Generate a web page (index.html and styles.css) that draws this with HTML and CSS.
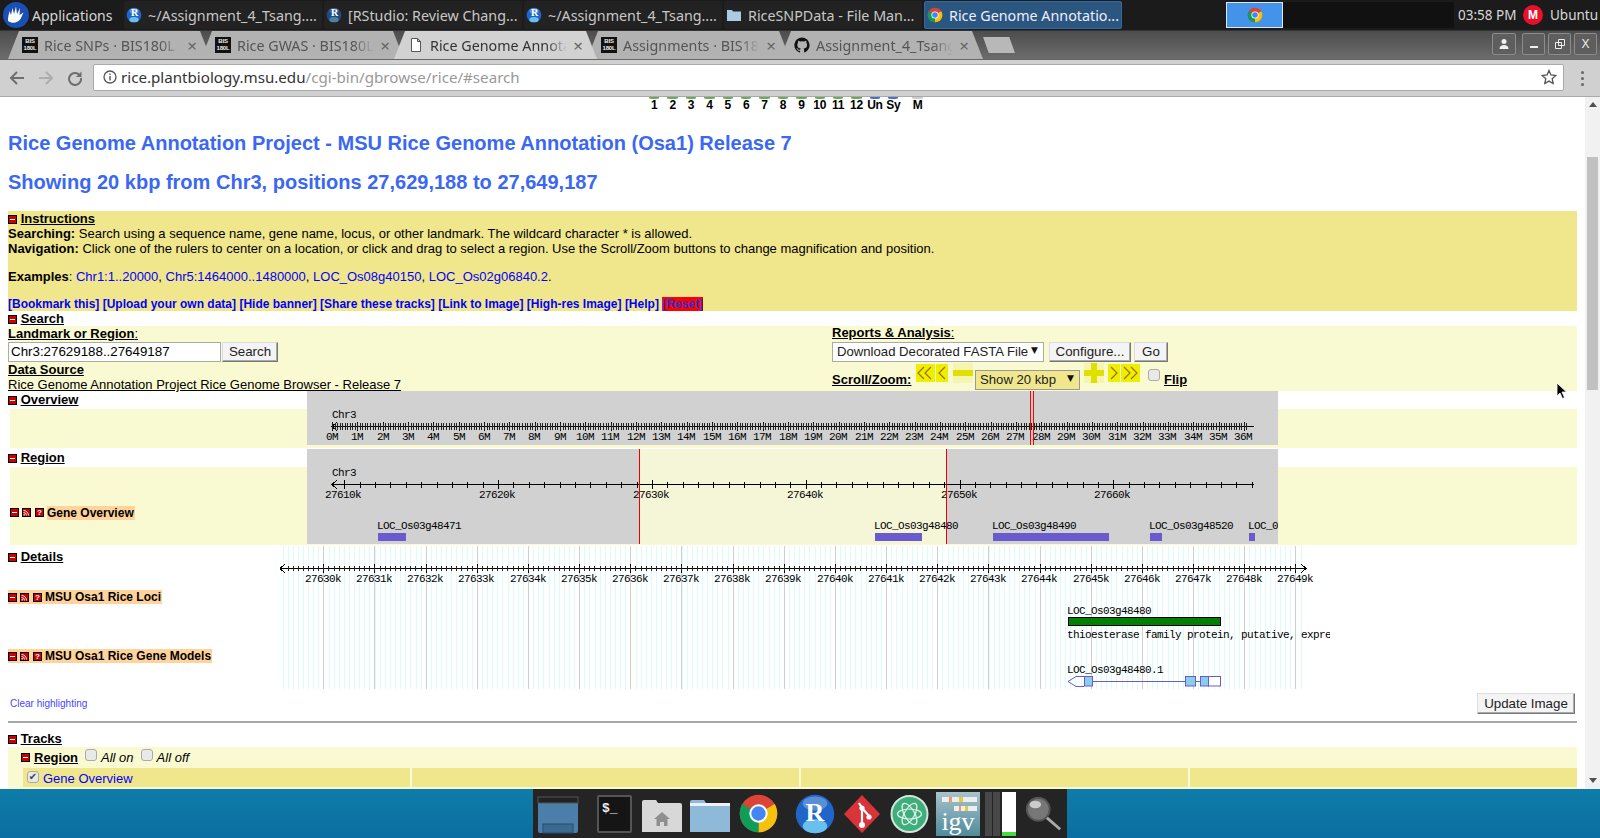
FILE: index.html
```html
<!DOCTYPE html>
<html lang="en">
<head>
<meta charset="utf-8">
<title>Rice Genome Annotation Project</title>
<link rel="stylesheet" href="styles.css">
</head>
<body>
<svg class="defs" width="0" height="0">
  <symbol id="minus" viewBox="0 0 9 9"><rect width="9" height="9" fill="#000"/><rect x="1" y="1" width="7" height="7" fill="#c00"/><rect x="2" y="4" width="5" height="1" fill="#fff"/></symbol>
  <symbol id="rss" viewBox="0 0 9 9"><rect width="9" height="9" fill="#000"/><rect x="1" y="1" width="7" height="7" fill="#c00"/><path d="M1.5 2.5A5 5 0 0 1 6.5 7.5M1.5 4.5A3 3 0 0 1 4.5 7.5" fill="none" stroke="#fff" stroke-width=".9"/><rect x="1.5" y="6.2" width="1.3" height="1.3" fill="#fff"/></symbol>
  <symbol id="chrome" viewBox="0 0 24 24"><circle cx="12" cy="12" r="11" fill="#db4437"/><path d="M12 12 21.5 6.500A11 11 0 0 1 12 23Z" fill="#f4c20d"/><path d="M12 12 12 23A11 11 0 0 1 2.500 6.500Z" fill="#0f9d58"/><circle cx="12" cy="12" r="5.400" fill="#fff"/><circle cx="12" cy="12" r="4.200" fill="#4285f4"/></symbol>
  <symbol id="rball" viewBox="0 0 24 24"><circle cx="12" cy="12" r="11" fill="#1f66c8"/><ellipse cx="12" cy="19" rx="7" ry="4" fill="#69c0ef"/><ellipse cx="12" cy="6" rx="7" ry="4" fill="#5a8fd8"/></symbol>
</svg>

<header class="panel">
  <div class="panel-left">
    <svg class="whisker" viewBox="0 0 26 26" width="26" height="26"><circle cx="13" cy="13" r="13" fill="#1a4fb4"/><path d="M5 19C5 14 6 12 6.500 9L8 13 9.500 6 11 12 13 4.500 14 12 17 6 16.500 13 20.500 10.500 17.500 17C15 21 9 22 5 19Z" fill="#fff"/></svg>
    <span class="apps">Applications</span>
  </div>
  <nav class="tasks">
    <div class="task"><svg width="16" height="16"><use href="#rball"/></svg><span class="r-mark">R</span><span>~/Assignment_4_Tsang....</span></div>
    <div class="task"><svg width="16" height="16" class="dim"><use href="#rball"/></svg><span class="r-mark">R</span><span>[RStudio: Review Chang...</span></div>
    <div class="task"><svg width="16" height="16"><use href="#rball"/></svg><span class="r-mark">R</span><span>~/Assignment_4_Tsang....</span></div>
    <div class="task"><svg width="16" height="16" viewBox="0 0 16 16"><path d="M1 3h5l1 1.500h8V14H1Z" fill="#a9cbe4"/></svg><span>RiceSNPData - File Man...</span></div>
    <div class="task active"><svg width="16" height="16"><use href="#chrome"/></svg><span>Rice Genome Annotatio...</span></div>
  </nav>
  <div class="workspaces">
    <div class="ws on"><svg width="16" height="16"><use href="#chrome"/></svg></div>
    <div class="ws"></div><div class="ws"></div><div class="ws"></div>
  </div>
  <div class="panel-right">
    <span class="clock">03:58 PM</span>
    <span class="mega">M</span>
    <span class="user">Ubuntu</span>
  </div>
</header>

<div class="tabstrip">
  <div class="tab"><span class="fav">BIS<br>180L</span><span class="tab-title">Rice SNPs · BIS180L</span><span class="tab-x">×</span></div>
  <div class="tab"><span class="fav">BIS<br>180L</span><span class="tab-title">Rice GWAS · BIS180L</span><span class="tab-x">×</span></div>
  <div class="tab current"><svg width="16" height="16" viewBox="0 0 16 16"><path d="M3.500 1.500h6l3 3v10h-9ZM9.500 1.500v3h3" fill="#fff" stroke="#555"/></svg><span class="tab-title">Rice Genome Annotation</span><span class="tab-x">×</span></div>
  <div class="tab"><span class="fav">BIS<br>180L</span><span class="tab-title">Assignments · BIS180L</span><span class="tab-x">×</span></div>
  <div class="tab"><svg width="16" height="16" viewBox="0 0 16 16"><path d="M8 .5a7.700 7.700 0 0 0-2.400 15c.4.100.5-.2.500-.4v-1.400c-2.100.5-2.600-1-2.600-1-.3-.9-.8-1.100-.8-1.100-.7-.5.100-.5.100-.5.800.1 1.200.8 1.200.8.700 1.200 1.800.8 2.300.6.100-.5.300-.8.500-1-1.700-.2-3.500-.9-3.500-3.800 0-.8.300-1.500.8-2-.1-.2-.3-1 .1-2 0 0 .6-.2 2.100.8a7 7 0 0 1 3.800 0c1.500-1 2.100-.8 2.100-.8.400 1 .2 1.800.1 2 .5.500.8 1.200.8 2 0 3-1.800 3.600-3.500 3.800.3.200.5.700.5 1.400v2.100c0 .2.100.5.500.4A7.700 7.700 0 0 0 8 .5Z" fill="#111"/></svg><span class="tab-title">Assignment_4_Tsang</span><span class="tab-x">×</span></div>
  <div class="newtab"></div>
  <div class="win-buttons">
    <span class="profile"><svg width="12" height="12" viewBox="0 0 12 12"><circle cx="6" cy="3.500" r="2.500" fill="#eee"/><path d="M1.500 11c0-3 2-4 4.500-4s4.500 1 4.500 4Z" fill="#eee"/></svg></span>
    <span class="winbtn"><svg width="10" height="10"><rect x="1" y="7" width="8" height="2" fill="#eee"/></svg></span>
    <span class="winbtn"><svg width="10" height="10"><path d="M3.500.5h6v6h-6ZM.5 3.500h6v6h-6Z" fill="#555" stroke="#eee"/></svg></span>
    <span class="winbtn winx">X</span>
  </div>
</div>

<div class="toolbar">
  <svg class="navicon" width="16" height="16" viewBox="0 0 16 16"><path d="M15 8H2M8 2 2 8l6 6" fill="none" stroke="#6e6e6e" stroke-width="2"/></svg>
  <svg class="navicon" width="16" height="16" viewBox="0 0 16 16"><path d="M1 8h13M8 2l6 6-6 6" fill="none" stroke="#adadad" stroke-width="2"/></svg>
  <svg class="navicon" width="16" height="16" viewBox="0 0 16 16"><path d="M13 5.500A6 6 0 1 0 14 8" fill="none" stroke="#6e6e6e" stroke-width="2"/><path d="M14.500 1.500v5.500H9Z" fill="#6e6e6e"/></svg>
  <div class="omnibox">
    <svg width="14" height="14" viewBox="0 0 14 14"><circle cx="7" cy="7" r="6" fill="none" stroke="#555" stroke-width="1.300"/><rect x="6.300" y="6" width="1.400" height="4.500" fill="#555"/><rect x="6.300" y="3.500" width="1.400" height="1.400" fill="#555"/></svg>
    <span class="url"><b>rice.plantbiology.msu.edu</b>/cgi-bin/gbrowse/rice/#search</span>
    <svg class="star" width="16" height="16" viewBox="0 0 16 16"><path d="m8 1.500 2 4.500 4.800.5-3.600 3.200 1 4.800L8 12.100 3.800 14.500l1-4.800L1.200 6.500 6 6Z" fill="none" stroke="#555" stroke-width="1.300"/></svg>
  </div>
  <div class="dots"><i></i><i></i><i></i></div>
</div>

<div class="viewport">
  <main class="page">
    <div class="chroms">
      <span class="g">1</span><span class="g">2</span><span class="g">3</span><span class="g">4</span><span class="g">5</span><span class="g">6</span><span class="g">7</span><span class="g">8</span><span class="g">9</span><span class="g">10</span><span class="g">11</span><span class="g">12</span><span class="b">Un</span><span class="b">Sy</span><span class="m">M</span>
    </div>
    <h1 class="title">Rice Genome Annotation Project - MSU Rice Genome Annotation (Osa1) Release 7</h1>
    <h1 class="title second">Showing 20 kbp from Chr3, positions 27,629,188 to 27,649,187</h1>

    <section class="instructions">
      <div class="sechead"><svg class="ico"><use href="#minus"/></svg> <u>Instructions</u></div>
      <div><b>Searching:</b> Search using a sequence name, gene name, locus, or other landmark. The wildcard character * is allowed.</div>
      <div><b>Navigation:</b> Click one of the rulers to center on a location, or click and drag to select a region. Use the Scroll/Zoom buttons to change magnification and position.</div>
      <div class="examples"><b>Examples</b>: <a>Chr1:1..20000</a>, <a>Chr5:1464000..1480000</a>, <a>LOC_Os08g40150</a>, <a>LOC_Os02g06840.2</a>.</div>
      <div class="linkrow"><a>[Bookmark this]</a> <a>[Upload your own data]</a> <a>[Hide banner]</a> <a>[Share these tracks]</a> <a>[Link to Image]</a> <a>[High-res Image]</a> <a>[Help]</a> <a class="reset">[Reset]</a></div>
    </section>

    <div class="sechead bar"><svg class="ico"><use href="#minus"/></svg> <u>Search</u></div>
    <section class="search">
      <div class="col left">
        <div class="lab"><u><b>Landmark or Region</b>:</u></div>
        <div class="ctl"><span class="input">Chr3:27629188..27649187</span><span class="btn">Search</span></div>
        <div class="lab ds"><u><b>Data Source</b></u></div>
        <div class="lab"><u>Rice Genome Annotation Project Rice Genome Browser - Release 7</u></div>
      </div>
      <div class="col">
        <div class="lab"><u><b>Reports &amp; Analysis</b>:</u></div>
        <div class="ctl"><span class="select">Download Decorated FASTA File<i>▼</i></span><span class="btn conf">Configure...</span><span class="btn go">Go</span></div>
        <div class="zoomrow">
          <u><b>Scroll/Zoom:</b></u>
          <span class="yb w18"><svg width="18" height="18" viewBox="0 0 18 18"><path d="M8 3 2 9l6 6M15 3 9 9l6 6" fill="none" stroke="#a07000" stroke-width="1.200"/></svg></span>
          <span class="yb w12"><svg width="12" height="18" viewBox="0 0 12 18"><path d="M9 3 3 9l6 6" fill="none" stroke="#a07000" stroke-width="1.200"/></svg></span>
          <span class="yz minus"></span>
          <span class="select khaki">Show 20 kbp<i>▼</i></span>
          <span class="yz plus"></span>
          <span class="yb w12 r"><svg width="12" height="18" viewBox="0 0 12 18"><path d="m3 3 6 6-6 6" fill="none" stroke="#a07000" stroke-width="1.200"/></svg></span>
          <span class="yb w18"><svg width="18" height="18" viewBox="0 0 18 18"><path d="m3 3 6 6-6 6M10 3l6 6-6 6" fill="none" stroke="#a07000" stroke-width="1.200"/></svg></span>
          <span class="check flipbox"></span>
          <u class="flip"><b>Flip</b></u>
        </div>
      </div>
    </section>

    <section class="overview">
      <div class="sechead h18"><svg class="ico"><use href="#minus"/></svg> <u>Overview</u></div>
      <div class="band b39"></div>
      <svg class="gimg ov" viewBox="307 391 971 54" width="971" height="54">
        <rect x="307" y="391" width="971" height="54" fill="#d1d1d1"/>
        <text x="332" y="418">Chr3</text>
        <path d="M333 426.500H1254M337 422l-5 4.500 5 4.500" class="rl"/>
        <path class="rl" data-ticks="332,25.33,37,422,431"/>
        <path class="rl thin" data-ticks="332,2.533,362,423,430"/>
        <g class="cen">
          <text x="332" y="440">0M</text><text x="357" y="440">1M</text><text x="383" y="440">2M</text><text x="408" y="440">3M</text><text x="433" y="440">4M</text><text x="459" y="440">5M</text><text x="484" y="440">6M</text><text x="509" y="440">7M</text><text x="534" y="440">8M</text><text x="560" y="440">9M</text><text x="585" y="440">10M</text><text x="610" y="440">11M</text><text x="636" y="440">12M</text><text x="661" y="440">13M</text><text x="686" y="440">14M</text><text x="712" y="440">15M</text><text x="737" y="440">16M</text><text x="762" y="440">17M</text><text x="788" y="440">18M</text><text x="813" y="440">19M</text><text x="838" y="440">20M</text><text x="864" y="440">21M</text><text x="889" y="440">22M</text><text x="914" y="440">23M</text><text x="939" y="440">24M</text><text x="965" y="440">25M</text><text x="990" y="440">26M</text><text x="1015" y="440">27M</text><text x="1041" y="440">28M</text><text x="1066" y="440">29M</text><text x="1091" y="440">30M</text><text x="1117" y="440">31M</text><text x="1142" y="440">32M</text><text x="1167" y="440">33M</text><text x="1193" y="440">34M</text><text x="1218" y="440">35M</text><text x="1243" y="440">36M</text>
        </g>
        <rect x="1030" y="391" width="1" height="54" fill="#f00"/><rect x="1033" y="391" width="1" height="54" fill="#f00"/>
      </svg>
    </section>

    <section class="region">
      <div class="sechead h18"><svg class="ico"><use href="#minus"/></svg> <u>Region</u></div>
      <div class="band b78">
        <div class="tracklabel small"><svg class="ico"><use href="#minus"/></svg><svg class="ico"><use href="#rss"/></svg><span class="help">?</span><b>Gene Overview</b></div>
      </div>
      <svg class="gimg rg" viewBox="307 449 971 96" width="971" height="96">
        <rect x="307" y="449" width="971" height="95" fill="#d1d1d1"/>
        <rect x="639" y="449" width="307" height="95" fill="#f5f5d8"/>
        <text x="332" y="476">Chr3</text>
        <path d="M333 484.500H1254M337 480l-5 4.500 5 4.500" class="rl"/>
        <path class="rl" data-ticks="344.3,153.8,6,480,489"/>
        <path class="rl" data-ticks="344.3,15.38,60,482,488"/>
        <g class="cen">
          <text x="343" y="498">27610k</text><text x="497" y="498">27620k</text><text x="651" y="498">27630k</text><text x="805" y="498">27640k</text><text x="959" y="498">27650k</text><text x="1112" y="498">27660k</text>
        </g>
        <g class="genes">
          <text x="377" y="529">LOC_Os03g48471</text><rect x="378" y="533" width="28" height="8"/>
          <text x="874" y="529">LOC_Os03g48480</text><rect x="875" y="533" width="47" height="8"/>
          <text x="992" y="529">LOC_Os03g48490</text><rect x="993" y="533" width="116" height="8"/>
          <text x="1149" y="529">LOC_Os03g48520</text><rect x="1150" y="533" width="12" height="8"/>
          <text x="1248" y="529">LOC_0</text><rect x="1249" y="533" width="6" height="8"/>
        </g>
        <rect x="639" y="449" width="1" height="95" fill="#e00"/><rect x="946" y="449" width="1" height="95" fill="#e00"/>
      </svg>
    </section>

    <section class="details">
      <div class="sechead h18 dh"><svg class="ico"><use href="#minus"/></svg> <u>Details</u></div>
      <div class="tracklabel first"><svg class="ico"><use href="#minus"/></svg><svg class="ico"><use href="#rss"/></svg><span class="help">?</span><b>MSU Osa1 Rice Loci</b></div>
      <div class="tracklabel next"><svg class="ico"><use href="#minus"/></svg><svg class="ico"><use href="#rss"/></svg><span class="help">?</span><b>MSU Osa1 Rice Gene Models</b></div>
      <svg class="gimg dt" viewBox="280 546 1050 143" width="1050" height="143">
        <path class="cyan" data-ticks="282.5,5.116,200,546,689"/>
        <path class="grid" data-ticks="323.3,51.16,20,546,689"/>
        <path d="M280 568.500H1306M285 564l-5 4.500 5 4.500M1301 564l5 4.500-5 4.500" class="rl"/>
        <path class="rl" data-ticks="323.3,51.16,20,564,573"/>
        <path class="rl thin" data-ticks="287.5,5.116,198,566,571"/>
        <g class="cen">
          <text x="323" y="582">27630k</text><text x="374" y="582">27631k</text><text x="425" y="582">27632k</text><text x="476" y="582">27633k</text><text x="528" y="582">27634k</text><text x="579" y="582">27635k</text><text x="630" y="582">27636k</text><text x="681" y="582">27637k</text><text x="732" y="582">27638k</text><text x="783" y="582">27639k</text><text x="835" y="582">27640k</text><text x="886" y="582">27641k</text><text x="937" y="582">27642k</text><text x="988" y="582">27643k</text><text x="1039" y="582">27644k</text><text x="1091" y="582">27645k</text><text x="1142" y="582">27646k</text><text x="1193" y="582">27647k</text><text x="1244" y="582">27648k</text><text x="1295" y="582">27649k</text>
        </g>
        <text x="1067" y="614">LOC_Os03g48480</text>
        <rect x="1068.500" y="617.500" width="152" height="8" fill="#008000" stroke="#000"/>
        <text x="1067" y="638">thioesterase family protein, putative, expre</text>
        <text x="1067" y="673">LOC_Os03g48480.1</text>
        <path d="M1084 676.500h-8l-8 5 8 5h8M1093 681.500h92M1196 681.500h4" fill="none" stroke="#6a5acd"/>
        <rect x="1084.500" y="676.500" width="8" height="9.500" fill="#87ceeb" stroke="#6a5acd"/>
        <rect x="1185.500" y="676.500" width="10" height="9.500" fill="#87ceeb" stroke="#6a5acd"/>
        <rect x="1200.500" y="676.500" width="8" height="9.500" fill="#87ceeb" stroke="#6a5acd"/>
        <rect x="1208.500" y="676.500" width="12" height="9.500" fill="#fff" stroke="#6a5acd"/>
      </svg>
    </section>

    <div class="updaterow"><a class="clear">Clear highlighting</a><span class="btn update">Update Image</span></div>
    <hr class="rule">
    <div class="sechead bar tracks-h"><svg class="ico"><use href="#minus"/></svg> <u>Tracks</u></div>
    <section class="tracks">
      <div class="trk-head"><svg class="ico"><use href="#minus"/></svg> <u><b>Region</b></u><span class="check"></span><em>All on</em><span class="check"></span><em>All off</em></div>
      <div class="trk-grid">
        <div class="cell"><span class="check checked">✔</span><a>Gene Overview</a></div>
        <div class="cell"></div><div class="cell"></div><div class="cell"></div>
      </div>
    </section>
  </main>
  <aside class="scrollbar">
    <span class="arrow up"></span>
    <span class="thumb"></span>
    <span class="arrow down"></span>
  </aside>
  <svg class="cursor" width="12" height="18" viewBox="0 0 12 18"><path d="M1 1v13l3-3 2.500 5.500 2-1L6 10h4.500Z" fill="#000" stroke="#fff" stroke-width=".8"/></svg>
</div>

<footer class="desktop">
  <div class="dock">
    <svg class="dk-desk" width="42" height="40" viewBox="0 0 42 40"><rect x="1" y="3" width="40" height="36" rx="2" fill="#4b7ea8"/><rect x="1" y="3" width="40" height="6" fill="#222" stroke="#555"/><rect x="6" y="30" width="30" height="9" fill="#3a6a90" stroke="#264d6d"/></svg>
    <div class="term">$_</div>
    <svg class="dk-home" width="41" height="40" viewBox="0 0 41 40"><path d="M1 8q0-2 2-2h12l2 3h22q2 0 2 2v27H1Z" fill="#d8d8d8"/><path d="M21 18l-8 7h2.500v7h3.500v-4h4v4h3.500v-7H29Z" fill="#8f8f8f"/></svg>
    <svg class="dk-fold" width="41" height="40" viewBox="0 0 41 40"><path d="M1 8q0-2 2-2h12l2 3h22q2 0 2 2v27H1Z" fill="#8fb9d8"/><rect x="1" y="9" width="40" height="3" fill="#eef"/></svg>
    <svg class="dk-chrome" width="41" height="41"><use href="#chrome"/></svg>
    <div class="bigr"><svg width="42" height="42"><use href="#rball"/></svg><span>R</span></div>
    <svg class="dk-git" width="38" height="42" viewBox="0 0 38 42"><path d="M19 2 37 21 19 40 1 21Z" fill="#d8343a"/><path d="M16 10l3 5v18M19 15l8 9" fill="none" stroke="#fff" stroke-width="2.200"/><circle cx="19" cy="32" r="3" fill="#fff"/><circle cx="26" cy="24" r="2.600" fill="#fff"/><circle cx="19" cy="15" r="2.600" fill="#fff"/></svg>
    <svg class="dk-atom" width="39" height="40" viewBox="0 0 39 40"><circle cx="19.500" cy="20" r="18" fill="#3fae7c" stroke="#cfe8dc" stroke-width="2"/><g fill="none" stroke="#e6f5ee" stroke-width="1.200"><ellipse cx="19.500" cy="20" rx="12" ry="5"/><ellipse cx="19.500" cy="20" rx="12" ry="5" transform="rotate(60 19.500 20)"/><ellipse cx="19.500" cy="20" rx="12" ry="5" transform="rotate(120 19.500 20)"/></g></svg>
    <div class="igv"><i class="s1"></i><i class="s2"></i><span>igv</span></div>
    <div class="stripes"><i></i><i></i><b></b></div>
    <svg class="dk-mag" width="40" height="42" viewBox="0 0 42 42"><line x1="24" y1="24" x2="39" y2="37" stroke="#aaa" stroke-width="3"/><circle cx="16" cy="16" r="12" fill="#777" stroke="#555" stroke-width="2"/><ellipse cx="13" cy="11" rx="6" ry="4" fill="#ccc"/></svg>
  </div>
</footer>
<script src="script.js"></script>
</body>
</html>
```
FILE: styles.css
```css
* { box-sizing: border-box; }
html, body { margin: 0; height: 100%; overflow: hidden; }
body { display: flex; flex-direction: column; width: 1600px; height: 838px; font-family: "Liberation Sans", Arial, sans-serif; background: #fff; }
.defs { position: absolute; }

/* desktop panel */
.panel { height: 30px; background: #1b1b1b; color: #d8d8d8; display: flex; align-items: center; font: 13.500px "Noto Sans", sans-serif; flex: none; }
.panel-left { width: 124px; display: flex; align-items: center; gap: 3px; padding-left: 3px; font-size: 14px; }
.tasks { display: flex; gap: 2px; width: 998px; height: 28px; font-size: 14.300px; }
.task { width: 198px; flex: none; display: flex; align-items: center; gap: 6px; padding-left: 2px; background: #222; color: #c8c8c8; border-radius: 2px; position: relative; white-space: nowrap; }
.task.active { background: #2a5680; color: #eef; border: 1px solid #356aa0; }
.dim { opacity: .6; }
.r-mark { position: absolute; left: 7px; top: 6px; font: bold 10px "Liberation Serif", serif; color: #fff; }
.workspaces { display: flex; margin-left: 104px; height: 26px; }
.ws { width: 57px; background: #111; display: flex; align-items: center; justify-content: center; }
.ws.on { background: #4393ea; border: 1px solid #dfe8f0; }
.panel-right { display: flex; align-items: center; margin-left: 4px; }
.clock { width: 64px; white-space: nowrap; }
.mega { width: 20px; height: 20px; border-radius: 50%; background: #e8102a; color: #fff; font: bold 12px/20px "Liberation Sans", sans-serif; text-align: center; margin-left: 1px; }
.user { margin-left: 7px; white-space: nowrap; }

/* chrome tabs */
.tabstrip { height: 30px; flex: none; display: flex; align-items: flex-end; padding-left: 8px; background: linear-gradient(#4d4d4d, #6c6c6c); border-top: 1px solid #333; border-bottom: 1px solid #666; position: relative; }
.tab { width: 203px; height: 28px; flex: none; margin-right: -10px; display: flex; align-items: center; gap: 6px; padding: 0 14px 0 14px; background: #b2b2b2; clip-path: polygon(0 100%, 11px 0, calc(100% - 11px) 0, 100% 100%); font: 14.300px "Noto Sans", sans-serif; color: #555; }
.tab svg { flex: none; }
.fav { width: 16px; height: 16px; flex: none; background: #111; color: #eee; font: bold 6px/7px "Liberation Sans", sans-serif; text-align: center; letter-spacing: -.2px; padding-top: 1px; white-space: nowrap; overflow: hidden; }
.tab-title { flex: 1; min-width: 0; overflow: hidden; white-space: nowrap; mask-image: linear-gradient(90deg, #000 85%, transparent); -webkit-mask-image: linear-gradient(90deg, #000 85%, transparent); }
.tab-x { font-size: 17px; line-height: 1; color: #666; flex: none; }
.tab.current { background: #d2d2d2; color: #333; z-index: 1; }
.newtab { width: 32px; height: 16px; margin: 0 0 6px 10px; background: #b8b8b8; clip-path: polygon(0 0, 82% 0, 100% 100%, 18% 100%); flex: none; }
.win-buttons { margin-left: auto; display: flex; gap: 3px; align-self: flex-start; padding-right: 3px; padding-top: 2px; }
.win-buttons span { width: 23px; height: 22px; border: 1px solid #8c8c8c; background: #5e5e5e; color: #eee; display: flex; align-items: center; justify-content: center; font-size: 12px; border-radius: 2px; }
.win-buttons .profile { width: 24px; margin-right: 3px; }
.winx { font-weight: normal; }

/* chrome toolbar */
.toolbar { height: 37px; flex: none; background: #d0d0d0; display: flex; align-items: center; padding-left: 9px; border-bottom: 1px solid #aaa; }
.navicon { margin-right: 13px; flex: none; }
.navicon:nth-of-type(3) { margin-right: 10px; }
.omnibox { width: 1473px; height: 27px; margin-top: -2px; background: #fff; border: 1px solid #aaa; border-radius: 2px; display: flex; align-items: center; padding: 0 6px 0 9px; font: 15.150px "Noto Sans", sans-serif; color: #999; }
.url { margin-left: 4px; flex: 1; white-space: nowrap; }
.url b { font-weight: normal; color: #333; }
.dots { width: 36px; display: flex; flex-direction: column; align-items: center; gap: 3px; }
.dots i { width: 3px; height: 3px; background: #666; border-radius: 50%; }

/* browser page */
.viewport { flex: 1; display: flex; position: relative; overflow: hidden; height: 692px; }
.page { width: 1585px; height: 692px; overflow: hidden; padding: 0 8px; font-size: 13px; color: #000; flex: none; }
.scrollbar { width: 15px; background: #f1f1f1; display: flex; flex-direction: column; align-items: center; }
.thumb { width: 11px; height: 233px; background: #c1c1c1; margin-top: 50px; }
.arrow { width: 0; height: 0; border-left: 4px solid transparent; border-right: 4px solid transparent; }
.arrow.up { border-bottom: 5px solid #505050; margin-top: 5px; }
.arrow.down { border-top: 5px solid #505050; margin-top: auto; margin-bottom: 6px; }
.cursor { position: absolute; left: 1556px; top: 285px; }

.chroms { height: 16px; display: flex; padding-left: 637px; font: bold 12px/14px "Liberation Sans", sans-serif; }
.chroms span { width: 18.400px; text-align: center; flex: none; padding-top: 1px; position: relative; letter-spacing: -.3px; }
.chroms span::before { content: ""; position: absolute; left: 4px; right: 4px; top: 0; height: 2px; border-radius: 0 0 50% 50%; background: #6cab55; }
.chroms .b::before { background: #4a6ec0; }
.chroms .m { margin-left: 6px; }
.chroms .m::before { background: #ccc; }
.title { margin: 19px 0 0; font-size: 20.030px; line-height: 23px; height: 23px; font-weight: bold; color: #3a68f2; white-space: nowrap; }
.second { margin-top: 16px; }

.instructions { margin-top: 17px; height: 100px; background: #f0e68c; line-height: 15px; }
.sechead { font-weight: bold; height: 15px; line-height: 15px; }
.ico { width: 9px; height: 9px; vertical-align: -1px; flex: none; }
.examples { margin-top: 14px; line-height: 14px; }
.examples + .linkrow { margin-top: 13px; }
a { color: #00f; }
.linkrow { font-weight: bold; font-size: 12px; line-height: 14px; white-space: nowrap; }
.reset { background: #f00; color: #3030d0; }

.search { height: 65px; background: #fafad2; display: flex; }
.col { width: 824px; flex: none; line-height: 14px; }
.col.left { padding-top: 1px; }
.lab { height: 14px; }
.lab.ds { margin-top: 1px; height: 15px; }
.ctl { height: 20px; margin-top: 2px; display: flex; align-items: flex-start; }
.left .ctl { margin-top: 1px; }
.input { width: 213px; height: 20px; background: #fff; border: 1px solid #aaa; padding-left: 2px; line-height: 18px; font-size: 13.330px; }
.btn { background: #f4f4f4; border: 1px solid; border-color: #ddd #777 #777 #ddd; box-shadow: inset -1px -1px 0 #aaa; display: inline-flex; align-items: center; justify-content: center; font-size: 13.330px; height: 20px; color: #222; }
.ctl > .btn { width: 56px; margin-left: 1px; }
.ctl > .btn.conf { width: 82px; margin-left: 5px; }
.ctl > .btn.go { width: 34px; margin-left: 3px; }
.select { width: 212px; height: 20px; background: #fff; border: 1px solid #aaa; padding-left: 4px; line-height: 18px; position: relative; font-size: 13.150px; color: #222; white-space: nowrap; }
.select i { font: 9px "DejaVu Sans", sans-serif; position: absolute; right: 5px; top: 2px; color: #111; }
.zoomrow { display: flex; align-items: flex-start; height: 25px; margin-top: 1px; line-height: 14px; }
.zoomrow > u:first-child { margin-top: 10px; width: 84px; flex: none; }
.yb { background: #eeee00; height: 18px; margin-top: 1px; flex: none; }
.w18 { width: 19px; }
.w12 { width: 12px; margin-left: 1px; }
.w12.r { margin: 1px 1px 0 1px; }
.yz { width: 20px; height: 20px; background: #f5f5b0; flex: none; position: relative; }
.yz::before { content: ""; position: absolute; left: 0; right: 0; top: 7px; height: 6px; background: #e0e000; }
.yz.minus { margin: 0 2px 0 5px; }
.yz.plus { margin: 0 3px 0 4px; }
.yz.plus::after { content: ""; position: absolute; top: 0; bottom: 0; left: 7px; width: 6px; background: #e0e000; }
.select.khaki { width: 105px; background: #f0e68c; margin-top: 7px; border-color: #999; }
.check { width: 12px; height: 12px; border: 1px solid #aaa; background: #e9e9e9; border-radius: 3px; flex: none; display: inline-block; }
.flipbox { margin: 6px 0 0 8px; }
.flip { margin: 10px 0 0 4px; }

.overview, .region, .details { position: relative; }
.overview { height: 58px; }
.region { height: 96px; }
.details { height: 143px; }
.h18 { height: 18px; padding-top: 1px; }
.dh { height: 18px; padding-top: 4px; }
.band { background: #fafad2; margin-left: 2px; }
.b39 { height: 39px; }
.b78 { height: 78px; padding-top: 38px; }
.gimg { position: absolute; display: block; top: 0; font: 11px "Liberation Mono", monospace; letter-spacing: -.6px; overflow: hidden; }
.gimg.ov, .gimg.rg { left: 299px; }
.gimg.dt { left: 272px; top: 1px; }
.gimg text { fill: #000; }
.cen text { text-anchor: middle; }
.rl { stroke: #000; fill: none; stroke-width: 1; shape-rendering: crispEdges; }
.thin { stroke: #222; }
.cyan { stroke: #dcfcfc; fill: none; shape-rendering: crispEdges; }
.grid { stroke: #cfcfcf; fill: none; shape-rendering: crispEdges; }
.genes rect { fill: #6a5acd; }
.tracklabel { height: 14px; line-height: 14px; font-size: 12px; font-weight: bold; display: inline-flex; align-items: center; gap: 3px; white-space: nowrap; position: relative; z-index: 1; }
.tracklabel b { background: #ffd39b; align-self: stretch; padding-right: 1px; }
.help { width: 9px; height: 9px; margin-left: 1px; background: #c00; outline: 1px solid #000; outline-offset: -1px; color: #fff; font: bold 8px/9px "Liberation Sans", sans-serif; text-align: center; flex: none; }
.details .tracklabel { display: flex; width: max-content; background: #ffd39b; }
.first { margin-top: 27px; }
.next { margin-top: 45px; }

.updaterow { height: 33px; display: flex; justify-content: space-between; align-items: flex-start; padding: 5px 2px 0 2px; }
.clear { font-size: 10px; color: #4646ff; margin-top: 5px; }
.btn.update { width: 98px; height: 21px; }
.rule { margin: 0; height: 2px; border: 0; background: #a8a8a8; }
.tracks-h { margin-top: 8px; height: 16px; line-height: 16px; }
.tracks { height: 43px; background: #fafad2; }
.trk-head { height: 21px; display: flex; align-items: center; padding-left: 13px; gap: 4px; font-size: 13px; }
.trk-head u { margin-right: 3px; }
.trk-head .check { margin-bottom: 5px; }
.trk-head em { margin-right: 3px; }
.trk-grid { margin-left: 15px; height: 19px; display: grid; grid-template-columns: 387px 387px 387px 1fr; gap: 2px; }
.cell { background: #f0e68c; display: flex; align-items: center; padding: 1px 0 0 4px; gap: 4px; }
.checked { font: 10px/10px "DejaVu Sans", sans-serif; color: #444; text-align: center; margin-top: -3px; }

/* dock */
.desktop { height: 49px; flex: none; background: linear-gradient(#0f7ca8, #0a6fa2); display: flex; justify-content: center; }
.dock { width: 534px; background: #242424; display: flex; align-items: center; padding-left: 4px; }
.dock > * { flex: none; }
.dk-desk { margin-right: 18px; }
.term { width: 35px; height: 38px; background: #151515; border: 2px solid #555; color: #eee; font: bold 13px "Liberation Mono", monospace; padding: 4px 0 0 3px; margin-right: 9px; border-radius: 2px; }
.dk-home { margin-right: 7px; }
.dk-fold { margin-right: 8px; }
.dk-chrome { margin-right: 15px; }
.bigr { width: 42px; height: 42px; position: relative; margin-right: 7px; }
.bigr span { position: absolute; left: 0; right: 0; top: 5px; text-align: center; color: #fff; font: bold 26px "Liberation Serif", serif; }
.dk-git { margin-right: 9px; }
.dk-atom { margin-right: 7px; }
.igv { width: 44px; height: 44px; background: linear-gradient(#a8c3cc, #4f8b9c); position: relative; color: #fff; font: 26px/30px "Liberation Serif", serif; text-align: center; overflow: hidden; }
.igv span { position: absolute; left: 0; right: 0; top: 15px; }
.igv i { position: absolute; height: 5px; background: linear-gradient(90deg, #eee 20%, #e96 20% 30%, #eee 30% 50%, #dc4 50% 60%, #eee 60%); }
.s1 { left: 6px; right: 3px; top: 5px; }
.s2 { left: 18px; right: 3px; top: 14px; }
.stripes { width: 31px; height: 44px; margin-left: 5px; margin-right: 7px; display: flex; gap: 1px; }
.stripes i { width: 7px; background: #484848; }
.stripes b { width: 14px; margin-left: 1px; background: linear-gradient(#fff 90%, #4d4 90%); }
```
FILE: script.js
```js
// Draws the repetitive ruler ticks and grid lines of the genome browser images.
document.querySelectorAll('[data-ticks]').forEach(function (path) {
  var p = path.getAttribute('data-ticks').split(',').map(Number);
  var d = '';
  for (var i = 0; i < p[2]; i++) {
    var x = Math.round(p[0] + p[1] * i) + 0.5;
    d += 'M' + x + ' ' + p[3] + 'V' + p[4];
  }
  path.setAttribute('d', d);
});
```
